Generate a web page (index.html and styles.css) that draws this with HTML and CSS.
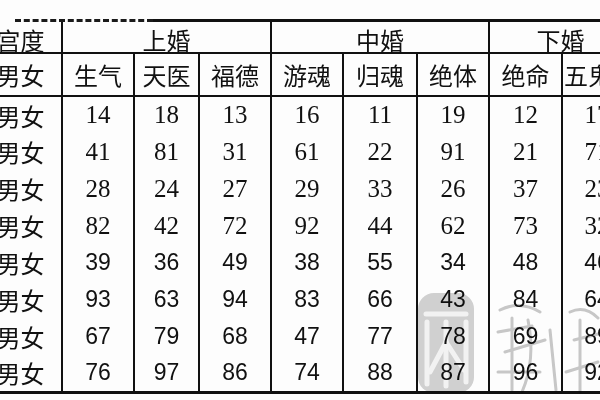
FILE: index.html
```html
<!DOCTYPE html>
<html lang="zh">
<head>
<meta charset="utf-8">
<title>宫度表</title>
<link rel="stylesheet" href="styles.css">
</head>
<body>
<div class="page">
  <div class="topstrip">
    <div class="ts-gap"></div>
    <div class="ts-dash"></div>
    <div class="ts-solid"></div>
  </div>
  <table class="grid">
    <colgroup>
      <col class="c0"><col class="c72"><col class="c65"><col class="c72"><col class="c72"><col class="c74"><col class="c72"><col class="c73"><col class="c70">
    </colgroup>
    <thead>
      <tr class="h1">
        <th class="first">宫度</th>
        <th colspan="3">上婚</th>
        <th colspan="3">中婚</th>
        <th colspan="2">下婚</th>
      </tr>
      <tr class="h2">
        <th class="first">男女</th>
        <th>生气</th><th>天医</th><th>福德</th>
        <th>游魂</th><th>归魂</th><th>绝体</th>
        <th>绝命</th><th class="hd-last">五鬼</th>
      </tr>
    </thead>
    <tbody>
      <tr class="serif"><td class="first">男女</td><td>14</td><td>18</td><td>13</td><td>16</td><td>11</td><td>19</td><td>12</td><td>17</td></tr>
      <tr class="serif"><td class="first">男女</td><td>41</td><td>81</td><td>31</td><td>61</td><td>22</td><td>91</td><td>21</td><td>71</td></tr>
      <tr class="serif"><td class="first">男女</td><td>28</td><td>24</td><td>27</td><td>29</td><td>33</td><td>26</td><td>37</td><td>23</td></tr>
      <tr class="serif"><td class="first">男女</td><td>82</td><td>42</td><td>72</td><td>92</td><td>44</td><td>62</td><td>73</td><td>32</td></tr>
      <tr class="sans"><td class="first">男女</td><td>39</td><td>36</td><td>49</td><td>38</td><td>55</td><td>34</td><td>48</td><td>46</td></tr>
      <tr class="sans"><td class="first">男女</td><td>93</td><td>63</td><td>94</td><td>83</td><td>66</td><td>43</td><td>84</td><td>64</td></tr>
      <tr class="sans"><td class="first">男女</td><td>67</td><td>79</td><td>68</td><td>47</td><td>77</td><td>78</td><td>69</td><td>89</td></tr>
      <tr class="sans last"><td class="first">男女</td><td>76</td><td>97</td><td>86</td><td>74</td><td>88</td><td>87</td><td>96</td><td>92</td></tr>
    </tbody>
  </table>
  <svg class="watermark" width="200" height="110" viewBox="400 290 200 110" aria-hidden="true">
    <rect x="418" y="293" width="56" height="100" rx="16" fill="#d2d2d2"/>
    <g stroke="#f4f4f4" stroke-width="5" fill="none" stroke-linecap="round">
      <path d="M426 314 H466"/>
      <path d="M427 322 V384"/>
      <path d="M446 322 V386"/>
      <path d="M446 342 L430 372"/>
      <path d="M446 342 L464 370"/>
      <path d="M466 322 V382"/>
    </g>
    <g stroke="#c9c9c9" stroke-width="3" fill="none" stroke-linecap="round">
      <path d="M500 310 Q520 300 540 312"/>
      <path d="M512 318 V390"/>
      <path d="M498 332 L532 326"/>
      <path d="M505 352 L545 340"/>
      <path d="M528 320 Q536 360 522 392"/>
      <path d="M498 372 H540"/>
      <path d="M550 330 L556 390"/>
      <path d="M570 312 Q585 305 598 318"/>
      <path d="M574 340 L598 334"/>
      <path d="M580 320 V392"/>
      <path d="M566 372 L598 362"/>
    </g>
  </svg>
</div>
</body>
</html>
```

FILE: styles.css
```css
html, body {
  margin: 0;
  padding: 0;
  background: #ffffff;
}

.page {
  position: relative;
  width: 600px;
  height: 400px;
  overflow: hidden;
  background: #fdfdfd;
}

.topstrip {
  display: flex;
  height: 22px;
  margin-left: 0;
}

.ts-gap {
  width: 15px;
}

.ts-dash {
  width: 138px;
  border-bottom: 3px dashed #1a1a1a;
}

.ts-solid {
  flex: 1;
  border-bottom: 3px solid #111111;
}

.grid {
  table-layout: fixed;
  border-collapse: collapse;
  margin-left: -10px;
  width: 642px;
  color: #111111;
}

.c0 { width: 72px; }
.c72 { width: 72px; }
.c65 { width: 65px; }
.c73 { width: 73px; }
.c74 { width: 74px; }
.c70 { width: 70px; }

.grid th,
.grid td {
  padding: 0;
  text-align: center;
  vertical-align: middle;
  white-space: nowrap;
  overflow: visible;
  border-left: 2px solid #111111;
  border-right: 2px solid #111111;
}

.grid th {
  font-family: "Noto Sans CJK SC", "Noto Sans", sans-serif;
  font-weight: 400;
  font-size: 24px;
  line-height: 24px;
  border-bottom: 2px solid #111111;
}

.h1 { height: 31px; }
.h1 th { padding-top: 4px; vertical-align: bottom; }
.h2 { height: 43px; }

.grid td.first,
.grid th.first {
  font-family: "Noto Sans CJK SC", "Noto Sans", sans-serif;
  font-size: 24px;
  font-weight: 400;
  padding-right: 10px;
  border-left: none;
}

.grid th.hd-last {
  text-align: left;
  padding-left: 1px;
}

tbody tr { height: 37px; }

tbody tr.last td { border-bottom: 3px solid #111111; }

.serif td {
  font-family: "Liberation Serif", "Times New Roman", serif;
  font-size: 25px;
}

.sans td {
  font-family: "Liberation Sans", Arial, sans-serif;
  font-size: 23px;
}

.watermark {
  position: absolute;
  left: 400px;
  top: 290px;
  mix-blend-mode: multiply;
  pointer-events: none;
}
```
